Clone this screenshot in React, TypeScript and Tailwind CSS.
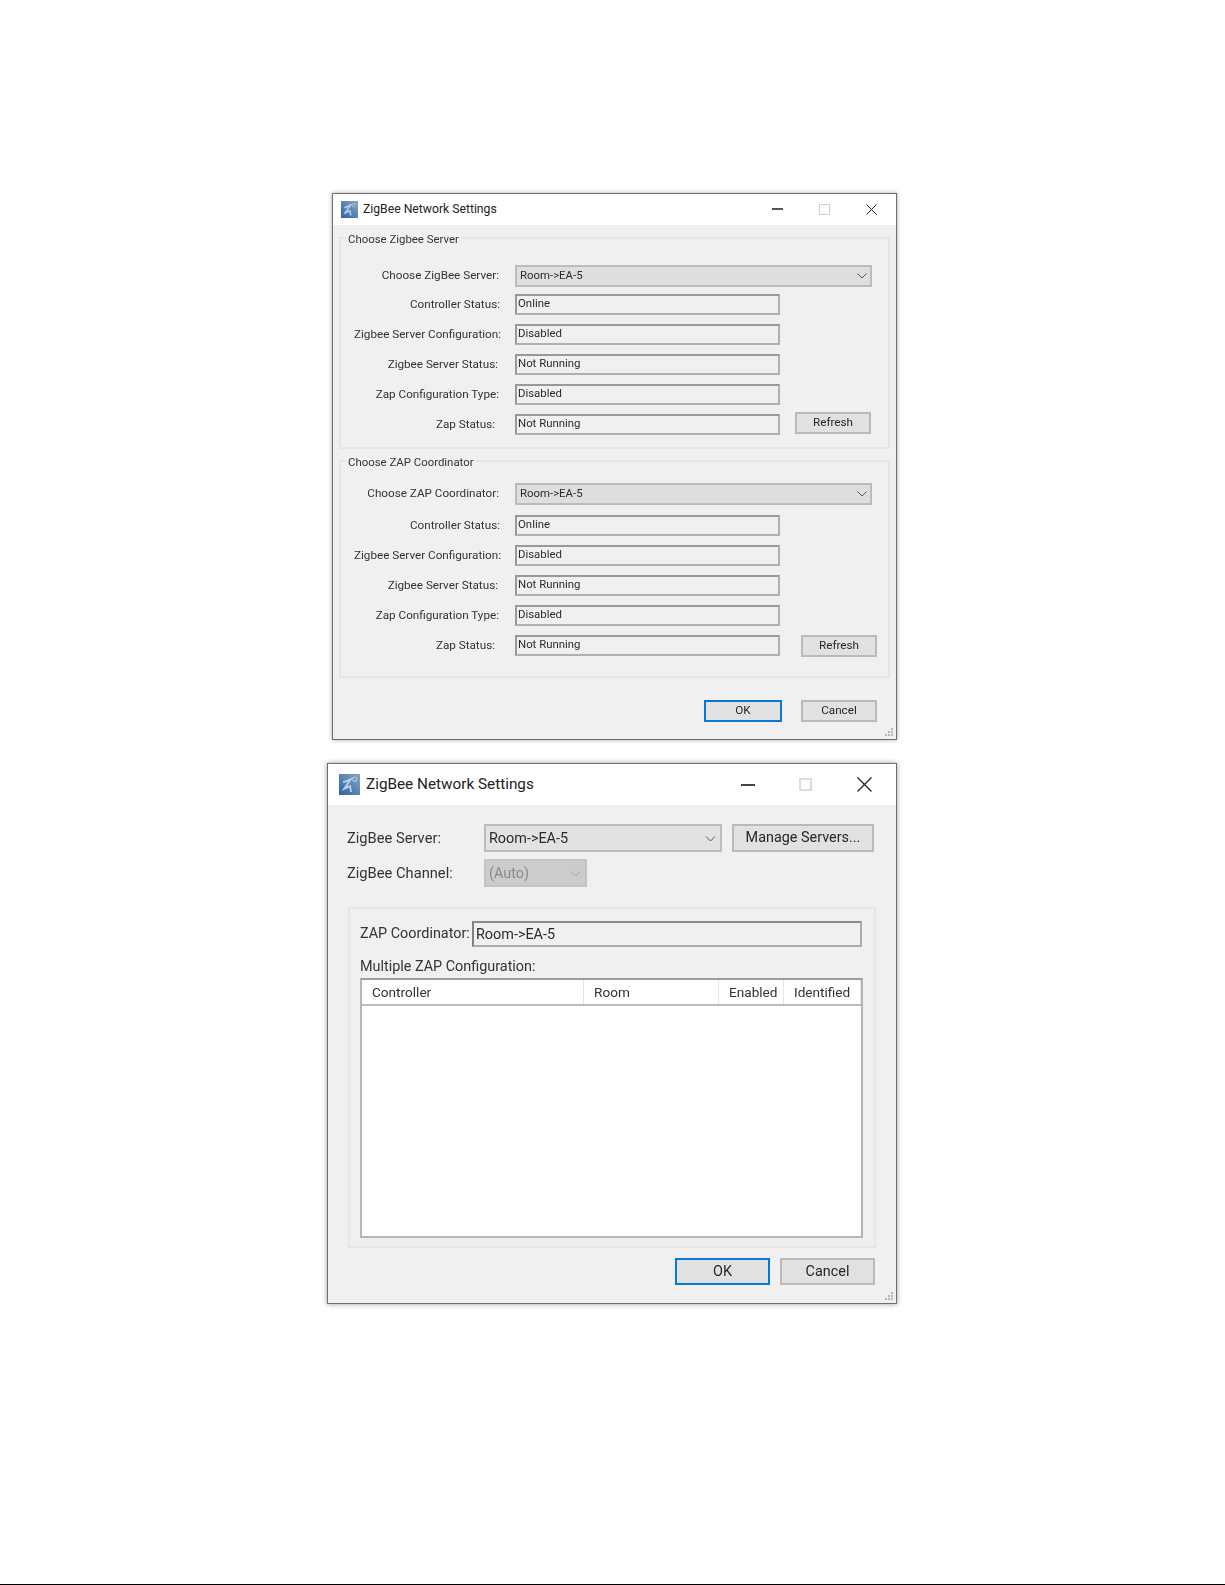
import React from "react";

const font = { fontFamily: "Roboto, 'Liberation Sans', sans-serif" };

function AppIcon({ className }: { className: string }) {
  return (
    <svg viewBox="0 0 20 20" className={className}>
      <defs>
        <linearGradient id="zb" x1="0" y1="1" x2="1" y2="0">
          <stop offset="0" stopColor="#2a64a6" />
          <stop offset="1" stopColor="#8aa5c4" />
        </linearGradient>
      </defs>
      <rect width="20" height="20" fill="url(#zb)" />
      <path d="M4 8 L11 5 L5 14 L10.5 11.5 L11.5 17" fill="none" stroke="#b9cfe6" strokeWidth="1.8" />
      <circle cx="15" cy="5" r="2" fill="none" stroke="#b8cbe0" strokeWidth="1" />
    </svg>
  );
}

function WindowControls({ big }: { big?: boolean }) {
  if (big) {
    return (
      <div className="ml-auto flex items-center">
        <div className="h-[2px] w-[14px] bg-[#444]" />
        <div className="ml-[44px] h-[13px] w-[13px] border-2 border-[#dcdcdc]" />
        <svg viewBox="0 0 14 14" className="ml-[45px] mr-[24px] h-[15px] w-[15px]">
          <path d="M0.5 0.5 L13.5 13.5 M13.5 0.5 L0.5 13.5" stroke="#222" strokeWidth="1.2" />
        </svg>
      </div>
    );
  }
  return (
    <div className="ml-auto flex items-center pb-[1px]">
      <div className="h-[2px] w-[11px] bg-[#555]" />
      <div className="ml-[36px] h-[11px] w-[11px] border border-[#cfcfcf]" />
      <svg viewBox="0 0 11 11" className="ml-[36px] mr-[19px] h-[11px] w-[11px]">
        <path d="M0.5 0.5 L10.5 10.5 M10.5 0.5 L0.5 10.5" stroke="#222" strokeWidth="1" />
      </svg>
    </div>
  );
}

function Chevron({ className, color = "#555" }: { className: string; color?: string }) {
  return (
    <svg viewBox="0 0 10 6" className={className}>
      <path d="M0.5 0.5 L5 5 L9.5 0.5" fill="none" stroke={color} strokeWidth="1" />
    </svg>
  );
}

function Grip() {
  return (
    <svg viewBox="0 0 10 10" className="absolute bottom-[2px] right-[2px] h-[10px] w-[10px]">
      <g fill="#b5b5b5">
        <rect x="7" y="1" width="2" height="2" />
        <rect x="4" y="4" width="2" height="2" />
        <rect x="7" y="4" width="2" height="2" />
        <rect x="1" y="7" width="2" height="2" />
        <rect x="4" y="7" width="2" height="2" />
        <rect x="7" y="7" width="2" height="2" />
      </g>
    </svg>
  );
}

function Field({ value }: { value: string }) {
  return (
    <div className="flex h-[21px] w-[265px] items-center border-2 border-[#b0b0b0] border-l-[#999999] border-t-[#999999] bg-[#f0f0f0] pb-[1px] pl-[1px] text-[11.4px] text-[#2b2b2b]">
      {value}
    </div>
  );
}

function Button({ label, primary, className }: { label: string; primary?: boolean; className: string }) {
  return (
    <button
      className={
        "flex items-center justify-center border-2 bg-[#e1e1e1] text-[#262626] " +
        (primary ? "border-[#0a78d2] " : "border-[#bababa] ") +
        className
      }
    >
      {label}
    </button>
  );
}

function SmallRows({ combo, comboGap, refreshGap }: { combo: string; comboGap: string; refreshGap: string }) {
  const rows = [
    ["Controller Status:", "Online", "pr-[15px]"],
    ["Zigbee Server Configuration:", "Disabled", "pr-[14px]"],
    ["Zigbee Server Status:", "Not Running", "pr-[17px]"],
    ["Zap Configuration Type:", "Disabled", "pr-[16px]"],
  ];
  return (
    <>
      <div className="flex h-[21px] items-center">
        <div className="w-[174px] pr-[16px] text-right text-[11.7px] text-[#333]">{combo}</div>
        <div className="flex h-[22px] w-[357px] items-center justify-between border-2 border-[#bcbcbc] bg-[#dedede] pl-[3px] pr-[3px] text-[11.4px] text-[#2b2b2b]">
          Room-&gt;EA-5
          <Chevron className="h-[6px] w-[10px]" />
        </div>
      </div>
      {rows.map(([label, value, pad], i) => (
        <div key={label} className={"flex h-[21px] items-center " + (i === 0 ? comboGap : "mt-[9px]")}>
          <div className={"w-[174px] text-right text-[11.7px] text-[#333] " + pad}>{label}</div>
          <Field value={value} />
        </div>
      ))}
      <div className="mt-[9px] flex h-[21px] items-center">
        <div className="w-[174px] pr-[20px] text-right text-[11.7px] text-[#333]">Zap Status:</div>
        <Field value="Not Running" />
        <Button label="Refresh" className={"h-[22px] w-[76px] text-[11.7px] " + refreshGap} />
      </div>
    </>
  );
}

function SmallGroup(props: { title: string; combo: string; comboGap: string; refreshGap: string; className: string }) {
  return (
    <fieldset className={"border-2 border-[#e6e6e6] " + props.className}>
      <legend className="ml-[5px] px-[2px] pt-[2px] text-[11.4px] leading-[14px] text-[#333]">{props.title}</legend>
      <SmallRows combo={props.combo} comboGap={props.comboGap} refreshGap={props.refreshGap} />
    </fieldset>
  );
}

function SmallWindow() {
  return (
    <div className="relative ml-[332px] mt-[193px] flex h-[547px] w-[565px] flex-col border border-[#6f6f6f] bg-[#f0f0f0] shadow-[0_0_4px_rgba(0,0,0,0.35)] blur-[0.3px]">
      <div className="flex h-[31px] shrink-0 items-center bg-white pl-[8px]">
        <AppIcon className="h-[17px] w-[17px]" />
        <div className="ml-[5px] text-[12.2px] text-[#222]">ZigBee Network Settings</div>
        <WindowControls />
      </div>
      <div className="px-[6px]">
        <SmallGroup title="Choose Zigbee Server" combo="Choose ZigBee Server:" comboGap="mt-[8px]" refreshGap="ml-[15px] mt-[-3px]" className="mt-[5px] h-[219px] pt-[19px]" />
        <SmallGroup title="Choose ZAP Coordinator" combo="Choose ZAP Coordinator:" comboGap="mt-[11px]" refreshGap="ml-[21px]" className="mt-[4px] h-[225px] pt-[14px]" />
        <div className="mt-[22px] flex">
          <Button label="OK" primary className="ml-[365px] h-[22px] w-[78px] text-[11.7px]" />
          <Button label="Cancel" className="ml-[19px] h-[22px] w-[76px] text-[11.7px]" />
        </div>
      </div>
      <Grip />
    </div>
  );
}

function BigWindow() {
  const cols = [
    ["Controller", "w-[222px]"],
    ["Room", "w-[135px]"],
    ["Enabled", "w-[65px]"],
    ["Identified", "flex-1"],
  ];
  return (
    <div className="relative ml-[327px] mt-[23px] flex h-[541px] w-[570px] flex-col border border-[#6f6f6f] bg-[#f0f0f0] shadow-[0_0_5px_rgba(0,0,0,0.4)] blur-[0.4px]">
      <div className="flex h-[41px] shrink-0 items-center bg-white pl-[11px]">
        <AppIcon className="h-[21px] w-[21px]" />
        <div className="ml-[6px] text-[15.3px] text-[#222]">ZigBee Network Settings</div>
        <WindowControls big />
      </div>
      <div className="pl-[19px] pr-[20px] pt-[19px] text-[14.4px] text-[#333]">
        <div className="flex items-center">
          <div className="w-[137px] text-[14.7px]">ZigBee Server:</div>
          <div className="flex h-[28px] w-[238px] items-center justify-between border-2 border-[#bcbcbc] bg-[#e2e2e2] pl-[3px] pr-[4px] pt-[1px] text-[#2b2b2b]">
            Room-&gt;EA-5
            <Chevron className="h-[6px] w-[11px]" />
          </div>
          <Button label="Manage Servers..." className="ml-[10px] h-[28px] w-[142px]" />
        </div>
        <div className="mt-[7px] flex items-center">
          <div className="w-[137px] text-[14.7px]">ZigBee Channel:</div>
          <div className="flex h-[28px] w-[103px] items-center justify-between border-2 border-[#c4c4c4] bg-[#cccccc] pl-[3px] pr-[4px] pt-[1px] text-[#8a8a8a]">
            (Auto)
            <Chevron className="h-[6px] w-[11px]" color="#a6a6a6" />
          </div>
        </div>
        <div className="ml-[1px] mt-[20px] h-[341px] border-2 border-[#e6e6e6] pl-[10px] pr-[10px] pt-[12px]">
          <div className="flex items-center">
            <div className="w-[112px] whitespace-nowrap">ZAP Coordinator:</div>
            <div className="flex h-[26px] w-[390px] items-center border-2 border-[#adadad] border-l-[#808080] border-t-[#8c8c8c] pl-[2px] pt-[1px] text-[#2b2b2b]">
              Room-&gt;EA-5
            </div>
          </div>
          <div className="mt-[8px] h-[23px] leading-[23px]">Multiple ZAP Configuration:</div>
          <div className="h-[260px] w-[503px] border-2 border-[#b5b5b5] border-t-[#9c9c9c] bg-white">
            <div className="flex h-[26px] border-b-2 border-[#bcbcbc] text-[13.6px]">
              {cols.map(([label, width]) => (
                <div key={label} className={"flex items-center border-r border-[#e5e5e5] pl-[10px] " + width}>
                  {label}
                </div>
              ))}
            </div>
          </div>
        </div>
        <div className="mr-[1px] mt-[10px] flex justify-end">
          <Button label="OK" primary className="h-[27px] w-[95px]" />
          <Button label="Cancel" className="ml-[10px] h-[27px] w-[95px]" />
        </div>
      </div>
      <Grip />
    </div>
  );
}

export default function App() {
  return (
    <div className="flex h-[1585px] w-[1225px] flex-col overflow-hidden bg-white" style={font}>
      <SmallWindow />
      <BigWindow />
      <div className="mt-auto h-px w-full bg-black" />
    </div>
  );
}
